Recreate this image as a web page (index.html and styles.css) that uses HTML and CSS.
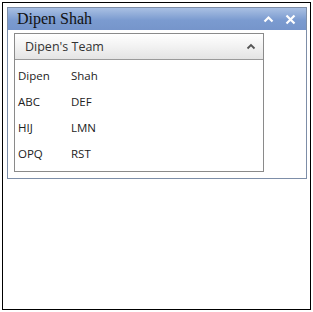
FILE: index.html
```html
<!DOCTYPE html>
<html lang="en">
<head>
  <meta charset="UTF-8">
  <title>Dipen Shah</title>
  <link rel="stylesheet" href="styles.css">
</head>
<body>
  <div class="frame">
    <div class="panel">
      <div class="panel-header">
        <span class="panel-title">Dipen Shah</span>
        <span class="panel-tools">
          <svg class="tool" width="11" height="8" viewBox="0 0 11 8"><path d="M1.5 6.5 L5.5 2.5 L9.5 6.5" fill="none" stroke="#fff" stroke-width="2.2"/></svg>
          <svg class="tool" width="11" height="11" viewBox="0 0 11 11"><path d="M1.5 1.5 L9.5 9.5 M9.5 1.5 L1.5 9.5" fill="none" stroke="#fff" stroke-width="2.2"/></svg>
        </span>
      </div>
      <div class="panel-body">
        <div class="accordion">
          <div class="acc-header">
            <span>Dipen's Team</span>
            <svg width="10" height="7" viewBox="0 0 10 7"><path d="M1.5 5.5 L5 2 L8.5 5.5" fill="none" stroke="#555" stroke-width="1.8"/></svg>
          </div>
          <div class="acc-content">
            <div class="row"><span class="first">Dipen</span><span>Shah</span></div>
            <div class="row"><span class="first">ABC</span><span>DEF</span></div>
            <div class="row"><span class="first">HIJ</span><span>LMN</span></div>
            <div class="row"><span class="first">OPQ</span><span>RST</span></div>
          </div>
        </div>
      </div>
    </div>
  </div>
</body>
</html>
```

FILE: styles.css
```css
body {
  margin: 0;
  padding: 2px;
  background: #fff;
}
.frame {
  width: 309px;
  height: 308px;
  border: 1px solid #000;
  padding: 4px;
  box-sizing: border-box;
}
.panel {
  width: 300px;
  border: 1px solid #7d8ea8;
  box-sizing: border-box;
}
.panel-header {
  height: 22px;
  display: flex;
  align-items: center;
  justify-content: space-between;
  padding: 0 10px 0 9px;
  background: linear-gradient(#a9c0e3, #7b9bd0 55%, #7695cb);
}
.panel-title {
  font-family: "Liberation Serif", serif;
  font-size: 16px;
  color: #111;
}
.panel-tools {
  display: flex;
  align-items: center;
  gap: 11px;
}
.panel-body {
  padding: 3px 42px 6px 6px;
}
.accordion {
  border: 1px solid #8a8a8a;
}
.acc-header {
  height: 25px;
  display: flex;
  align-items: center;
  justify-content: space-between;
  padding: 0 7px 0 10px;
  border-bottom: 1px solid #9a9a9a;
  background: linear-gradient(#ffffff, #f2f2f2 50%, #e4e4e4);
  font-family: "Open Sans", sans-serif;
  font-size: 12.5px;
  color: #333;
}
.acc-content {
  padding: 2px 0 5px 3px;
  font-family: "Open Sans", sans-serif;
  font-size: 11.5px;
  color: #222;
}
.row {
  display: flex;
  height: 26px;
  align-items: center;
}
.first {
  width: 53px;
}
```
